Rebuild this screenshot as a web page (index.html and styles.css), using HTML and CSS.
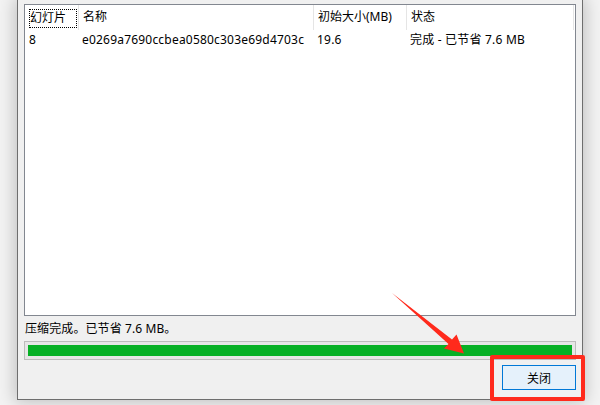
FILE: index.html
```html
<!DOCTYPE html>
<html lang="zh">
<head>
<meta charset="utf-8">
<title>压缩</title>
<link rel="stylesheet" href="styles.css">
</head>
<body>
<div class="dialog">
  <div class="list">
    <div class="hdr">
      <div class="hc c1"><span class="focus">幻灯片</span></div>
      <div class="hc c2">名称</div>
      <div class="hc c3">初始大小(MB)</div>
      <div class="hc c4">状态</div>
    </div>
    <div class="row">
      <div class="rc c1">8</div>
      <div class="rc c2">e0269a7690ccbea0580c303e69d4703c</div>
      <div class="rc c3">19.6</div>
      <div class="rc c4">完成 - 已节省 7.6 MB</div>
    </div>
  </div>
  <div class="status">压缩完成。已节省 7.6 MB。</div>
  <div class="progress"><div class="fill" style="width:100%"></div></div>
  <div class="actions"><button class="btn">关闭</button></div>
</div>
<div class="mark"></div>
<svg class="arrow" width="600" height="405" viewBox="0 0 600 405">
  <polygon points="392,293 452,339.5 456.5,334.5 464,353.5 444,348.5 448.5,344" fill="#ff2a1c"/>
</svg>
</body>
</html>
```
FILE: styles.css
```css
html, body {
  margin: 0;
  padding: 0;
}
body {
  width: 600px;
  height: 405px;
  overflow: hidden;
  background: #f3f3f3;
  font-family: "Noto Sans", "Noto Sans CJK SC", sans-serif;
  font-size: 12px;
  color: #000;
  position: relative;
}
.dialog {
  margin-left: 17px;
  width: 566px;
  height: 400px;
  box-sizing: border-box;
  border: 1px solid #6e6e6e;
  border-top: none;
  background: #f0f0f0;
  padding: 4px 6px 9px 6px;
  box-shadow: 0 0 16px 2px rgba(0, 0, 0, 0.22);
  display: flex;
  flex-direction: column;
}
.list {
  height: 313px;
  box-sizing: border-box;
  border: 1px solid #828790;
  background: #fff;
}
.hdr {
  display: flex;
  height: 25px;
}
.hc {
  box-sizing: border-box;
  border-right: 1px solid #e5e5e5;
  line-height: 24px;
  padding-left: 4px;
  white-space: nowrap;
  overflow: hidden;
}
.c1 { width: 54px; }
.c2 { width: 235px; }
.c3 { width: 93px; }
.c4 { width: 167px; }
.hc.c1 {
  padding: 4px 1px 2px 4px;
}
.focus {
  display: block;
  height: 17px;
  line-height: 16px;
  border: 1px dotted #000;
  padding-left: 0;
}
.row {
  display: flex;
  height: 20px;
  letter-spacing: 0.2px;
}
.rc {
  box-sizing: border-box;
  line-height: 20px;
  padding-left: 3px;
  white-space: nowrap;
  overflow: hidden;
}
.rc.c1 { padding-left: 4px; }
.status {
  margin-top: 5px;
  margin-left: 1px;
  line-height: 16px;
  height: 16px;
  letter-spacing: 0.1px;
}
.progress {
  margin-top: 4px;
  height: 19px;
  box-sizing: border-box;
  border: 1px solid #bcbcbc;
  background: #e6e6e6;
  padding: 3px 3px 3px 3px;
}
.fill {
  height: 100%;
  background: #06b025;
}
.actions {
  margin-top: 5px;
  display: flex;
  justify-content: flex-end;
}
.btn {
  width: 74px;
  height: 25px;
  box-sizing: border-box;
  border: 1px solid #0078d7;
  background: #e5f1fb;
  font-family: "Noto Sans", "Noto Sans CJK SC", sans-serif;
  font-size: 12px;
  color: #000;
  padding: 0;
  margin: 0;
}
.mark {
  position: absolute;
  left: 490px;
  top: 355px;
  width: 95px;
  height: 46px;
  box-sizing: border-box;
  border: 4px solid #ff2a1c;
  border-radius: 2px;
}
.arrow {
  position: absolute;
  left: 0;
  top: 0;
}
```
